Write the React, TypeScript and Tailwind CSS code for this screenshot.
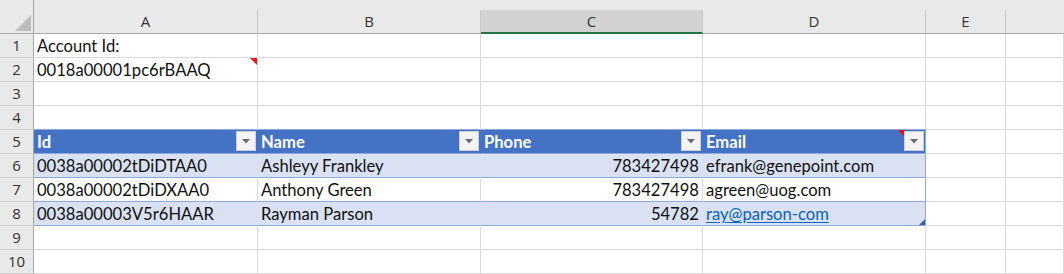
import React from "react";

const CELL_FONT = "[font-family:Lato,'Liberation_Sans',sans-serif]";
const HDR_FONT = "[font-family:'Open_Sans','Noto_Sans',sans-serif]";

const widths = ["w-[224px]", "w-[223px]", "w-[222px]", "w-[223px]", "w-[80px]", "flex-1"];
const letters = ["A", "B", "C", "D", "E", ""];

type CellDef = {
  text?: string;
  align?: "left" | "right";
  kind?: "plain" | "thead" | "band" | "white";
  link?: boolean;
  comment?: boolean;
  headComment?: boolean;
  filter?: boolean;
  last?: boolean;
  handle?: boolean;
  aboveTable?: boolean;
};

function FilterButton() {
  return (
    <div className="absolute right-[1px] top-[1px] w-[20px] h-[20px] bg-[#f3f3f3] border border-[#cfcfcf] flex items-center justify-center">
      <svg width="8" height="5" viewBox="0 0 8 5">
        <polygon points="0,0 8,0 4,4.5" fill="#6b6b6b" />
      </svg>
    </div>
  );
}

function Cell({ def, w }: { def: CellDef; w: string }) {
  const kind = def.kind ?? "plain";
  let bg = "bg-white";
  let br = "border-r-[#dadada]";
  let bb = "border-b-[#dadada]";
  let text = "text-[#111]";
  if (kind === "thead") {
    bg = "bg-[#4472c4]";
    br = def.last ? "border-r-[#8ea9db]" : "border-r-[#4472c4]";
    bb = "border-b-[#8ea9db]";
    text = "text-white font-bold";
  } else if (kind === "band") {
    bg = "bg-[#d9e1f2]";
    br = def.last ? "border-r-[#8ea9db]" : "border-r-[#d9e1f2]";
    bb = "border-b-[#8ea9db]";
  } else if (kind === "white") {
    br = def.last ? "border-r-[#8ea9db]" : "border-r-[#dadada]";
    bb = "border-b-[#8ea9db]";
  }
  if (def.aboveTable) bb = "border-b-[#8ea9db]";
  return (
    <div
      className={`relative ${w} h-[24px] shrink-0 border-r border-b ${br} ${bb} ${bg} flex items-end pb-[1px] ${
        def.align === "right" ? "justify-end pr-[3px]" : "justify-start pl-[3px]"
      }`}
    >
      {def.text ? (
        <span
          className={`${CELL_FONT} text-[16.6px] leading-[20px] whitespace-nowrap ${
            def.link ? "text-[#0563c1] underline underline-offset-[2px]" : text
          }`}
        >
          {def.text}
        </span>
      ) : null}
      {def.comment ? (
        <svg className="absolute right-0 top-0" width="7" height="7" viewBox="0 0 7 7">
          <polygon points="0,0 7,0 7,7" fill="#e8141b" />
        </svg>
      ) : null}
      {def.headComment ? (
        <svg className="absolute right-[20px] top-0" width="7" height="7" viewBox="0 0 7 7">
          <polygon points="0,0 7,0 7,7" fill="#e8141b" />
        </svg>
      ) : null}
      {def.filter ? <FilterButton /> : null}
      {def.handle ? (
        <svg className="absolute right-0 bottom-0" width="6" height="6" viewBox="0 0 6 6">
          <polygon points="6,0 6,6 0,6" fill="#3d5ea8" />
        </svg>
      ) : null}
    </div>
  );
}

const rows: CellDef[][] = [
  [{ text: "Account Id:" }, {}, {}, {}, {}, {}],
  [{ text: "0018a00001pc6rBAAQ", comment: true }, {}, {}, {}, {}, {}],
  [{}, {}, {}, {}, {}, {}],
  [{ aboveTable: true }, { aboveTable: true }, { aboveTable: true }, { aboveTable: true }, {}, {}],
  [
    { text: "Id", kind: "thead", filter: true },
    { text: "Name", kind: "thead", filter: true },
    { text: "Phone", kind: "thead", filter: true },
    { text: "Email", kind: "thead", filter: true, last: true, headComment: true },
    {},
    {},
  ],
  [
    { text: "0038a00002tDiDTAA0", kind: "band" },
    { text: "Ashleyy Frankley", kind: "band" },
    { text: "783427498", kind: "band", align: "right" },
    { text: "efrank@genepoint.com", kind: "band", last: true },
    {},
    {},
  ],
  [
    { text: "0038a00002tDiDXAA0", kind: "white" },
    { text: "Anthony Green", kind: "white" },
    { text: "783427498", kind: "white", align: "right" },
    { text: "agreen@uog.com", kind: "white", last: true },
    {},
    {},
  ],
  [
    { text: "0038a00003V5r6HAAR", kind: "band" },
    { text: "Rayman Parson", kind: "band" },
    { text: "54782", kind: "band", align: "right" },
    { text: "ray@parson-com", kind: "band", last: true, link: true, handle: true },
    {},
    {},
  ],
  [{}, {}, {}, {}, {}, {}],
  [{}, {}, {}, {}, {}, {}],
];

export default function App() {
  return (
    <div className="w-[1064px] h-[274px] overflow-hidden bg-white flex flex-col">
      {/* column header band */}
      <div className="h-[34px] shrink-0 flex bg-[#e9e9e9] border-b border-[#a8a8a8]">
        <div className="relative w-[34px] shrink-0 border-r border-[#a8a8a8]">
          <svg className="absolute left-0 top-0" width="33" height="33" viewBox="0 0 33 33">
            <polygon points="31,15 31,31 15,31" fill="#bdbdbd" />
          </svg>
        </div>
        {letters.map((l, i) => (
          <div key={i} className={`${widths[i]} shrink-0 flex flex-col`}>
            <div className="h-[10px]" />
            <div
              className={`flex-1 flex items-center justify-center ${HDR_FONT} text-[15px] ${
                i === 5 ? "" : "border-r border-[#c8c8c8]"
              } ${
                l === "C"
                  ? "bg-[#d2d2d2] text-[#1f3d2f] border-b-2 border-b-[#217346] -mb-[1px]"
                  : "text-[#333]"
              }`}
            >
              {l}
            </div>
          </div>
        ))}
      </div>
      {rows.map((r, ri) => (
        <div key={ri} className="flex h-[24px] shrink-0">
          <div
            className={`w-[34px] h-[24px] shrink-0 bg-[#e9e9e9] border-r border-r-[#a8a8a8] border-b border-b-[#d2d2d2] flex items-center justify-center ${HDR_FONT} text-[15px] text-[#333]`}
          >
            {ri + 1}
          </div>
          {r.map((c, ci) => (
            <Cell key={ci} def={c} w={widths[ci]} />
          ))}
        </div>
      ))}
    </div>
  );
}
